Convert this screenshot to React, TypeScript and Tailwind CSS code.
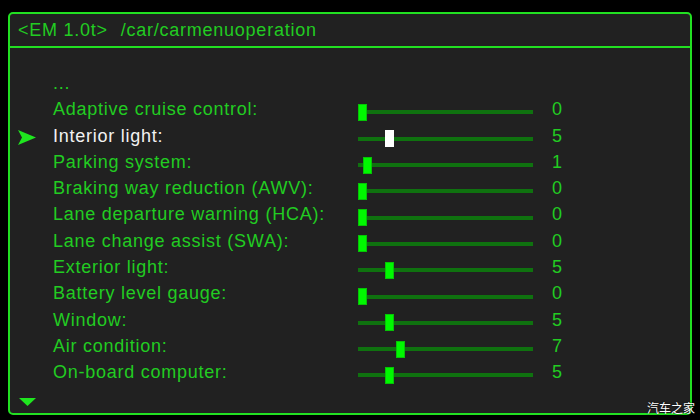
import React from "react";

const rows: { label: string; value: number }[] = [
  { label: "Adaptive cruise control:", value: 0 },
  { label: "Interior light:", value: 5 },
  { label: "Parking system:", value: 1 },
  { label: "Braking way reduction (AWV):", value: 0 },
  { label: "Lane departure warning (HCA):", value: 0 },
  { label: "Lane change assist (SWA):", value: 0 },
  { label: "Exterior light:", value: 5 },
  { label: "Battery level gauge:", value: 0 },
  { label: "Window:", value: 5 },
  { label: "Air condition:", value: 7 },
  { label: "On-board computer:", value: 5 },
];

const SELECTED = 1;

function Arrow() {
  return (
    <svg width="18" height="15" viewBox="0 0 18 15" className="translate-y-[2px]">
      <polygon points="0,0 18,7.5 0,15 4,7.5" fill="#1fe61f" />
    </svg>
  );
}

function Slider({ value, selected }: { value: number; selected: boolean }) {
  return (
    <div className="relative h-[17px] w-[175px] translate-y-[3px]">
      <div className="mt-[6.5px] h-[4px] w-[175px] bg-[#0f720f]" />
      <div
        className={
          "absolute top-0 h-[17px] w-[9px] " +
          (selected ? "bg-white" : "bg-[#00f800] border border-[#06c406]")
        }
        style={{ left: Math.round(value * 5.4) }}
      />
    </div>
  );
}

export default function App() {
  return (
    <div
      className="relative h-[420px] w-[700px] overflow-hidden bg-black pl-[8px] pt-[12px]"
      style={{ fontFamily: '"Liberation Sans", Arial, sans-serif' }}
    >
      <div className="flex h-[403px] w-[684px] flex-col rounded-[5px] border-2 border-[#22e022] bg-[#212121]">
        <div className="flex h-[34px] items-center border-b-2 border-[#22e022] pl-[8px] text-[18px] tracking-[0.75px] text-[#22cc22] whitespace-pre">
          <span>{"<EM 1.0t>"}</span>
          <span className="ml-[13px]">/car/carmenuoperation</span>
        </div>
        <div className="flex flex-1 flex-col pt-[22px] text-[18px] leading-[26.3px] tracking-[0.75px]">
          <div className="flex h-[26.3px] items-center">
            <div className="w-[43px]" />
            <div className="text-[#22cc22]">...</div>
          </div>
          {rows.map((r, i) => {
            const sel = i === SELECTED;
            return (
              <div key={r.label} className="flex h-[26.3px] items-center">
                <div className="flex w-[43px] items-center pl-[8px]">{sel ? <Arrow /> : null}</div>
                <div className={"w-[305px] whitespace-nowrap " + (sel ? "text-[#f2f2f2]" : "text-[#22cc22]")}>
                  {r.label}
                </div>
                <Slider value={r.value} selected={sel} />
                <div className="ml-[19px] text-[#22cc22]">{r.value}</div>
              </div>
            );
          })}
          <div className="mt-auto mb-[7px] pl-[9px]">
            <svg width="17" height="8" viewBox="0 0 17 8">
              <polygon points="0,0 17,0 8.5,8" fill="#1fe61f" />
            </svg>
          </div>
        </div>
      </div>
      <div
        className="absolute left-[647px] top-[401px] text-[12px] leading-[14px] text-white"
        style={{ fontFamily: '"Noto Sans CJK SC", sans-serif', textShadow: "0 0 2px #000" }}
      >
        汽车之家
      </div>
    </div>
  );
}
